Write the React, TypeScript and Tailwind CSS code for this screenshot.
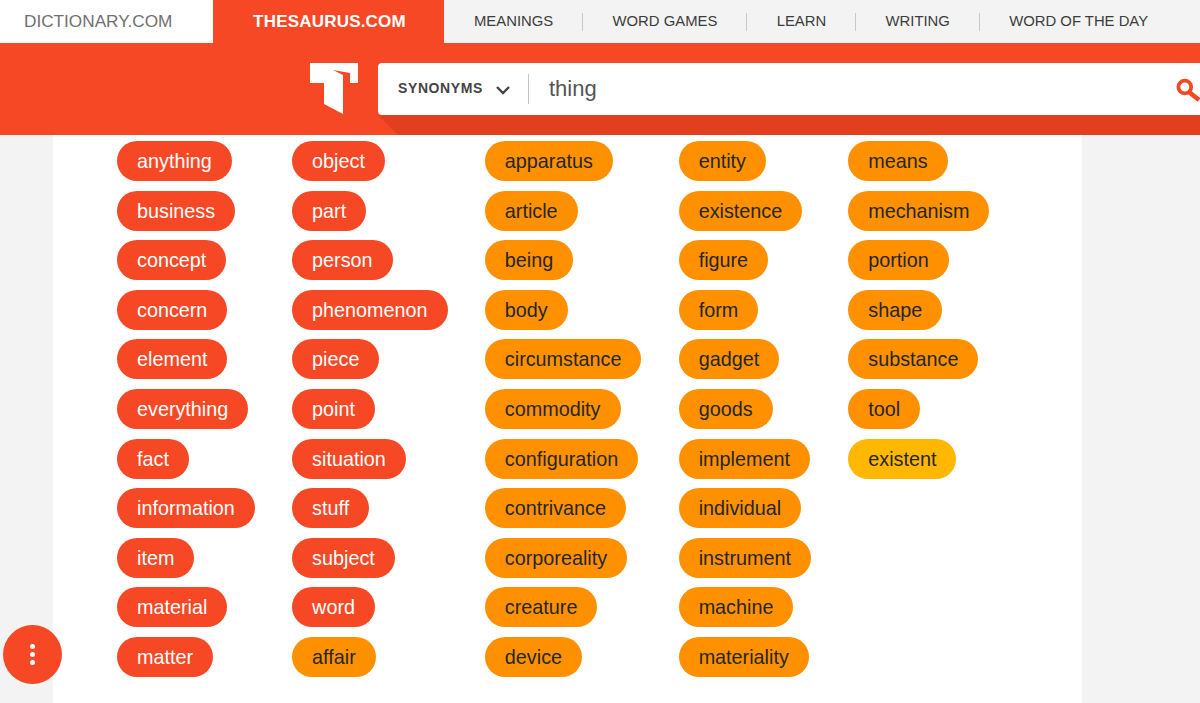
import React from "react";

const RED = "bg-[#f64825] text-white";
const ORANGE = "bg-[#ff9100] text-[#262626]";
const YELLOW = "bg-[#ffb700] text-[#262626]";

type Pill = [string, string];

const columns: Pill[][] = [
  ["anything", "business", "concept", "concern", "element", "everything", "fact", "information", "item", "material", "matter"].map((w) => [w, RED] as Pill),
  [
    ...["object", "part", "person", "phenomenon", "piece", "point", "situation", "stuff", "subject", "word"].map((w) => [w, RED] as Pill),
    ["affair", ORANGE] as Pill,
  ],
  ["apparatus", "article", "being", "body", "circumstance", "commodity", "configuration", "contrivance", "corporeality", "creature", "device"].map((w) => [w, ORANGE] as Pill),
  ["entity", "existence", "figure", "form", "gadget", "goods", "implement", "individual", "instrument", "machine", "materiality"].map((w) => [w, ORANGE] as Pill),
  [
    ...["means", "mechanism", "portion", "shape", "substance", "tool"].map((w) => [w, ORANGE] as Pill),
    ["existent", YELLOW] as Pill,
  ],
];

const navItems = ["MEANINGS", "WORD GAMES", "LEARN", "WRITING", "WORD OF THE DAY"];

export default function App() {
  return (
    <div className="h-[703px] w-[1200px] overflow-hidden bg-[#f3f3f3] font-['Liberation_Sans',Arial,sans-serif] relative">
      {/* top nav */}
      <div className="flex h-[43px]">
        <div className="flex w-[213px] items-center bg-white pl-6 text-[17.2px] text-[#707070]">DICTIONARY.COM</div>
        <div className="flex w-[231px] items-center justify-center bg-[#f64825] pl-[2px] text-[17px] font-bold tracking-[0.2px] text-white">THESAURUS.COM</div>
        <div className="flex flex-1 items-center pl-[30px]">
          {navItems.map((n, i) => (
            <React.Fragment key={n}>
              <span className="whitespace-nowrap text-[14.85px] text-[#3c3c3c]">{n}</span>
              {i < navItems.length - 1 && <span className="mx-[29.2px] h-[18px] w-px bg-[#c9c9c9]" />}
            </React.Fragment>
          ))}
        </div>
      </div>

      {/* header */}
      <div className="flex h-[92px] bg-[#f64825] pt-5 pl-[310px]">
        <svg width="48" height="52" viewBox="0 0 48 52" className="mr-5 shrink-0">
          <polygon fill="#ffffff" points="0,0 48,0 48,20 40,20 40,10 23,7 33,12 33,51 14,41 14,20 0,20" />
        </svg>
        <div className="relative h-[52px] w-[900px] shrink-0">
          <div className="absolute left-0 top-[52px] h-5 w-full bg-[#e23f1f] [clip-path:polygon(0_0,100%_0,100%_100%,20px_100%)]" />
          <div className="relative flex h-[52px] items-center rounded-l-[4px] bg-white pl-5">
            <span className="relative -top-px text-[14px] font-bold tracking-[0.6px] text-[#444444]">SYNONYMS</span>
            <svg width="14" height="9" viewBox="0 0 14 9" className="ml-[13px] mt-[2px]">
              <path d="M1 1 7 7l6-6" fill="none" stroke="#444444" strokeWidth="2.4" />
            </svg>
            <span className="ml-[18px] h-[30px] w-px bg-[#c4c4c4]" />
            <span className="relative -top-px ml-5 text-[22px] text-[#555555]">thing</span>
            <svg width="28" height="28" viewBox="0 0 28 28" className="absolute left-[798px] top-[12px]">
              <circle cx="8.8" cy="12" r="6.4" fill="none" stroke="#f64825" strokeWidth="3.8" />
              <path d="M13 17l10 8" stroke="#f64825" strokeWidth="4.6" />
            </svg>
          </div>
        </div>
      </div>

      {/* content */}
      <div className="ml-[53px] h-[568px] w-[1029px] bg-white pl-16 pt-1.5">
        <div className="flex gap-[37.25px]">
          {columns.map((col, i) => (
            <div key={i} className="flex flex-col items-start gap-y-[9.6px]">
              {col.map(([w, c]) => (
                <span key={w} className={`flex h-10 items-center rounded-[20px] px-5 pt-[2px] text-[19.8px] leading-none ${c}`}>
                  {w}
                </span>
              ))}
            </div>
          ))}
        </div>
      </div>

      {/* floating button */}
      <div className="absolute left-[3px] top-[625px] flex h-[59px] w-[59px] flex-col items-center justify-center gap-[3px] rounded-full bg-[#f64825]">
        <span className="h-[5px] w-[5px] rounded-full bg-white" />
        <span className="h-[5px] w-[5px] rounded-full bg-white" />
        <span className="h-[5px] w-[5px] rounded-full bg-white" />
      </div>
    </div>
  );
}
